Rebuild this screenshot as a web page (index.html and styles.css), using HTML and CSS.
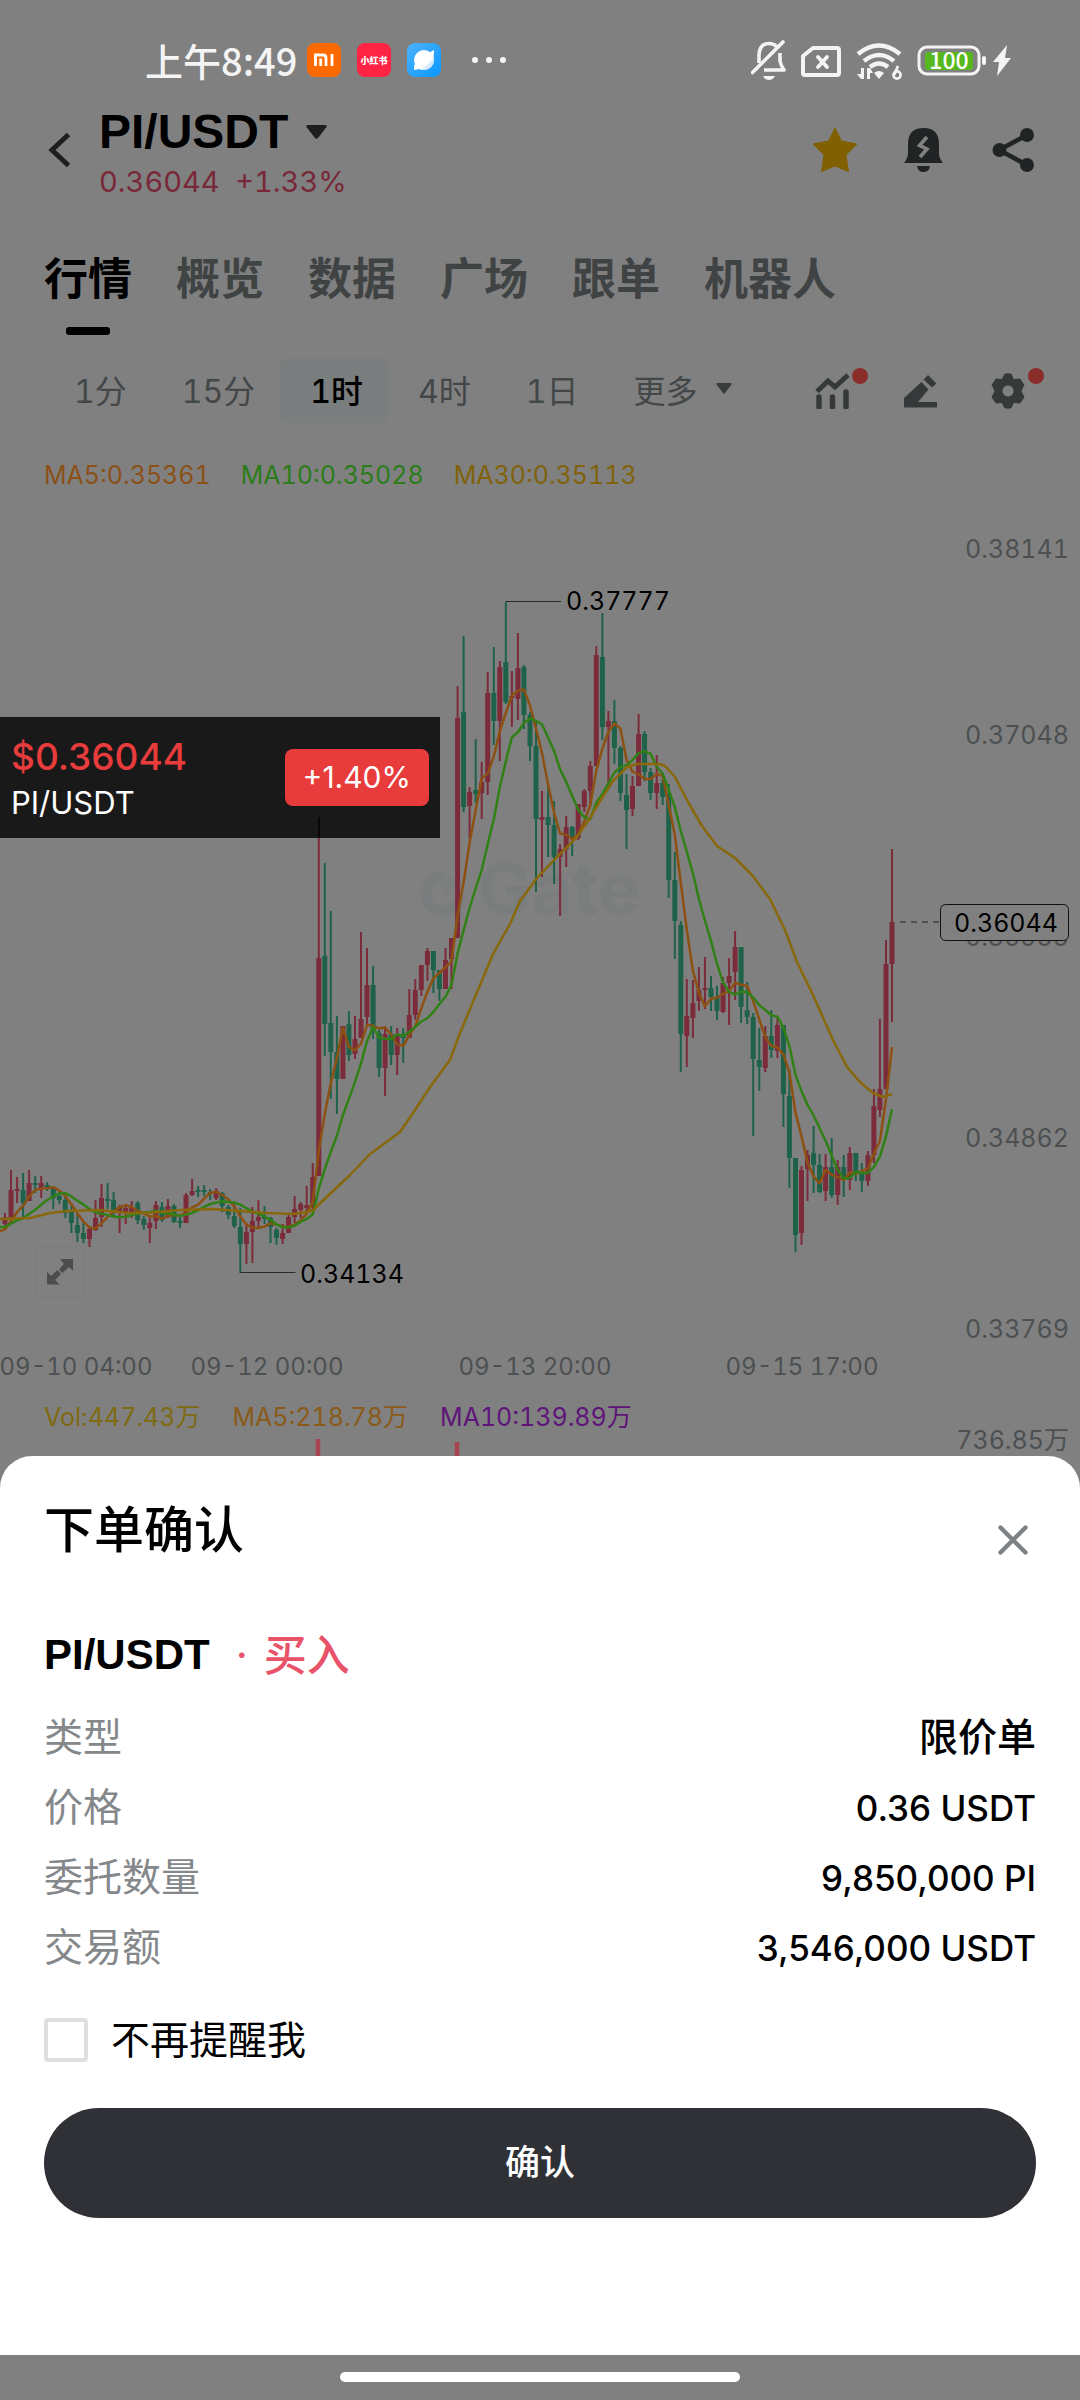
FILE: index.html
```html
<!DOCTYPE html>
<html lang="zh-CN">
<head>
<meta charset="utf-8">
<meta name="viewport" content="width=device-width, initial-scale=1">
<title>PI/USDT</title>
<link rel="stylesheet" href="styles.css">
</head>
<body>
<div class="status">
  <span class="status-time">上午8:49</span>
  <svg class="app-icon" viewBox="0 0 34 34" aria-hidden="true"><rect width="34" height="34" rx="8" fill="#ff6a00"/><path d="M8.500 23V12h7.500q3 0 3 3v8M13.700 15.500V23M25 11v12" fill="none" stroke="#fff" stroke-width="2.800"/></svg>
  <svg class="app-icon" viewBox="0 0 34 34" aria-hidden="true"><rect width="34" height="34" rx="8" fill="#ff2443"/><text class="app-name" x="17" y="21" text-anchor="middle">小红书</text></svg>
  <svg class="app-icon" viewBox="0 0 34 34" aria-hidden="true"><defs><linearGradient id="sky" x2="1" y2="1"><stop stop-color="#4db2ff"/><stop offset="1" stop-color="#0a98ff"/></linearGradient></defs><rect width="34" height="34" rx="8" fill="url(#sky)"/><circle cx="17" cy="17" r="10" fill="#fff"/><path d="M7 27q-1-5 5-12L27 7q1 7-5 13T7 27z" fill="#fff"/><path d="M12 27Q24 22 27 12q1 13-9 15z" fill="#d5ebfa"/></svg>
  <svg class="more-dots" viewBox="0 0 36 8" aria-hidden="true"><g fill="#f4f4f4"><circle cx="4" cy="4" r="3"/><circle cx="18" cy="4" r="3"/><circle cx="32" cy="4" r="3"/></g></svg>
  <svg class="status-right" viewBox="0 0 262 42" aria-hidden="true">
    <g fill="none" stroke="#f4f4f4" stroke-width="3.600" stroke-linejoin="round">
      <path d="M8 24V17C8 8 12 4.500 18 4.500q5 0 7.500 3M29 14v8q1 5 4 9H13"/><path d="M1.500 33.500L32 3" stroke-linecap="round"/>
      <path d="M52 17v17q0 2 2 2h32q2 0 2-2V11q0-2-2-2H62z" stroke-width="4"/>
      <path d="M67 18l9 10M76 18l-9 10" stroke-width="3.800" stroke-linecap="round"/>
      <path d="M107 15q21-17 42 0M113 22q15-12 30 0M119 28q9-7 18 0" stroke-width="4.400"/>
    </g>
    <path d="M12 37h12q-2 4-6 4t-6-4zM123 34q5-4 10 0l-5 6zM110 29h3v11h-3l-4-5h4zM116 40V29h3l3 5h-3v6z" fill="#f4f4f4"/>
    <circle cx="146" cy="36" r="3.600" fill="none" stroke="#f4f4f4" stroke-width="2.600"/><path d="M143 36l4-9" stroke="#f4f4f4" stroke-width="2.800"/>
    <rect x="168" y="8" width="60" height="27" rx="8" fill="none" stroke="#f4f4f4" stroke-width="3"/>
    <rect x="174" y="13" width="48" height="18" rx="3" fill="#57b81e"/><text class="battery-text" x="198" y="30" text-anchor="middle">100</text>
    <rect x="231" y="17" width="4" height="9" rx="2" fill="#f4f4f4"/>
    <path d="M256 6l-14 17h6l-2 14 14-18h-6z" fill="#f4f4f4"/>
  </svg>
</div>

<header class="pair-bar">
  <button class="icon-btn back" aria-label="返回"><svg width="24" height="36" viewBox="0 0 24 36"><path d="M20.500 2.500L4 18l16.500 15.500" fill="none" stroke="#1c1e1f" stroke-width="5"/></svg></button>
  <div class="pair-info">
    <h1 class="pair-title">PI/USDT <svg width="21" height="14" viewBox="0 0 21 14" aria-hidden="true"><path d="M1.500 0h18q2 1 1 2L12 13q-1.500 1.500-3 0L.500 2q-1-1 1-2z" fill="#1c1e1f"/></svg></h1>
    <p class="pair-price">0.36044&nbsp; +1.33%</p>
  </div>
  <div class="pair-actions">
    <button class="icon-btn" aria-label="收藏"><svg width="46" height="46" viewBox="0 0 46 46"><path d="M23 1l6.500 13L45 17 34 28l2.500 16.500L23 39 9.500 44.500 12 28 1 17l15.500-3z" fill="#806000" stroke="#806000" stroke-linejoin="round"/></svg></button>
    <button class="icon-btn" aria-label="提醒"><svg width="46" height="46" viewBox="0 0 46 46"><path d="M3 36q4-5 4-10V17Q7 1 22.500 1T38 17v9q0 5 4 10zM16 39h13q-1 6-6.500 6T16 39z" fill="#202425"/><path d="M26 10l-7.500 8.500 7.500 3.500-7 8" fill="none" stroke="#808080" stroke-width="3.600"/></svg></button>
    <button class="icon-btn" aria-label="分享"><svg width="46" height="46" viewBox="0 0 46 46"><path d="M37 8L9 23l28 15" fill="none" stroke="#202425" stroke-width="4.600"/><g fill="#202425"><circle cx="37" cy="8" r="7"/><circle cx="9.500" cy="23" r="7"/><circle cx="37" cy="38" r="7"/></g></svg></button>
  </div>
</header>

<nav class="tabs">
  <a class="tab active" href="#market">行情</a><a class="tab" href="#overview">概览</a><a class="tab" href="#data">数据</a><a class="tab" href="#square">广场</a><a class="tab" href="#copy">跟单</a><a class="tab" href="#bots">机器人</a>
</nav>

<div class="toolbar">
  <button class="period">1分</button><button class="period">15分</button><button class="period current">1时</button><button class="period">4时</button><button class="period">1日</button><button class="period">更多<svg width="16" height="11" viewBox="0 0 16 11" aria-hidden="true"><path d="M1 0h14q1 .500.500 1.500L9 10q-1 1-2 0L.500 1.500Q0 .500 1 0z" fill="#3a3d3e"/></svg></button>
  <div class="tools">
    <button class="icon-btn badge" aria-label="指标"><svg width="36" height="36" viewBox="0 0 36 36"><path d="M2 18.500L13 8l7 6L33 2" fill="none" stroke="#35393a" stroke-width="5"/><path d="M4 24v10M17.500 24v10M31 19v15" stroke="#35393a" stroke-width="5.500" stroke-linecap="round"/></svg></button>
    <button class="icon-btn" aria-label="画线"><svg width="36" height="36" viewBox="0 0 36 36"><path d="M1 34V25L18.500 9l7 7.500L15 29h19v5.500H1zM20.500 6.500L25 2l8.500 8.500-4.500 4z" fill="#35393a"/></svg></button>
    <button class="icon-btn badge" aria-label="设置"><svg width="36" height="36" viewBox="0 0 36 36"><path fill-rule="evenodd" d="M14 1h6l2.500 5.500 6.500-.500 4 6-3 6 3 6-4 6-6.500-.500L20 35h-6l-3-5.500L5 30l-4-6 3-6-3-6 4-6 6 .500zM17 12a6 6 0 1 0 .1 0z" fill="#35393a" stroke="#35393a" stroke-linejoin="round"/></svg></button>
  </div>
</div>

<main class="chart">
  <div class="legend price-legend"><span class="ma5">MA5:0.35361</span><span class="ma10">MA10:0.35028</span><span class="ma30">MA30:0.35113</span></div>
  <div class="plot">
    <svg id="candles" class="plot-svg" viewBox="0 500 1080 887" role="img" aria-label="PI/USDT 1时 K线">
      <g class="watermark"><path d="M443 877a17 17 0 1 0 17 17" fill="none" stroke="#7a7d7d" stroke-width="11"/><path d="M443 877h17v17h-17z" fill="#7c7f7f"/><text x="478" y="914">Gate</text></g>
      <g id="series"></g>
      <path d="M506 601.500h55M240.500 1272.500h55" class="leader"/>
      <path d="M900 922h40" class="last-line"/>
      <g class="mark"><text x="566" y="610">0.37777</text><text x="300" y="1283">0.34134</text></g>
      <g class="axis" text-anchor="end"><text x="1069" y="558">0.38141</text><text x="1069" y="744">0.37048</text><text x="1069" y="946">0.35955</text><text x="1069" y="1147">0.34862</text><text x="1069" y="1338">0.33769</text></g>
      <rect x="940.500" y="904.500" width="128" height="36" rx="5" class="last-box"/>
      <g class="mark"><text x="1058" y="932" text-anchor="end">0.36044</text></g>
      <g class="axis dates" text-anchor="middle"><text x="76" y="1375">09-10 04:00</text><text x="267" y="1375">09-12 00:00</text><text x="535" y="1375">09-13 20:00</text><text x="802" y="1375">09-15 17:00</text></g>
    </svg>
    <aside class="ticker">
      <div><p class="ticker-price">$0.36044</p><p class="ticker-pair">PI/USDT</p></div>
      <span class="ticker-change">+1.40%</span>
    </aside>
    <button class="icon-btn expand" aria-label="全屏"><svg width="26" height="26" viewBox="0 0 26 26"><path d="M13 0h13v12l-4-4-6.500 6L12 10.500 17 5zM0 25.500V13l4 4 6.500-6 3.500 4-6 6 4.500 4.500z" fill="#4a4c4d"/></svg></button>
  </div>
  <div class="volume">
    <div class="legend"><span class="vol">Vol:447.43万</span><span class="vma5">MA5:218.78万</span><span class="vma10">MA10:139.89万</span></div>
    <span class="vol-max">736.85万</span>
    <svg class="vol-bars" viewBox="0 0 1080 18" aria-hidden="true"><path d="M318 1v17M457 4v14" stroke="#a84352" stroke-width="4.500"/></svg>
  </div>
</main>

<section class="sheet" role="dialog" aria-labelledby="sheet-title">
  <div class="sheet-head">
    <h2 id="sheet-title">下单确认</h2>
    <button class="icon-btn close" aria-label="关闭"><svg width="30" height="30" viewBox="0 0 30 30"><path d="M2.500 2.500l25 25M27.500 2.500l-25 25" stroke="#7e8184" stroke-width="4.400" stroke-linecap="round"/></svg></button>
  </div>
  <p class="order-pair"><strong>PI/USDT</strong><span class="dot">·</span><span class="side">买入</span></p>
  <dl class="details">
    <div class="detail"><dt>类型</dt><dd>限价单</dd></div>
    <div class="detail"><dt>价格</dt><dd>0.36 USDT</dd></div>
    <div class="detail"><dt>委托数量</dt><dd>9,850,000 PI</dd></div>
    <div class="detail"><dt>交易额</dt><dd>3,546,000 USDT</dd></div>
  </dl>
  <label class="mute"><input type="checkbox">不再提醒我</label>
  <button class="confirm">确认</button>
</section>
<div class="home-bar"></div>
<script src="chart.js"></script>
</body>
</html>
```
FILE: styles.css
```css
* { box-sizing: border-box; }
body { margin: 0; background: #808080; color: #000; font-family: Inter, "Noto Sans CJK SC", sans-serif; overflow-x: hidden; }
h1, h2, p, dl, dd { margin: 0; }
button { margin: 0; border: 0; padding: 0; background: none; color: inherit; font: inherit; }
svg { display: block; flex: none; }
.icon-btn { display: flex; align-items: center; justify-content: center; }

.status { display: flex; align-items: center; padding: 15px 67px 0 145px; height: 104px; color: #f4f4f4; }
.status-time { font: 500 38px/56px "Noto Sans CJK SC", sans-serif; margin-right: 10px; }
.app-icon { width: 34px; height: 34px; margin-right: 16px; }
.app-name { font: 900 9px "Noto Sans CJK SC", sans-serif; fill: #fff; }
.more-dots { width: 36px; height: 8px; margin-left: 14px; }
.status-right { width: 262px; height: 42px; margin-left: auto; }
.battery-text { font: 500 23px "Noto Sans CJK SC", sans-serif; fill: #fff; }

.pair-bar { display: flex; align-items: flex-start; padding: 0 44px 0 48px; height: 100px; }
.back { width: 24px; height: 92px; margin-right: 27px; }
.pair-title { display: flex; align-items: center; gap: 18px; font: bold 48px/56px "Liberation Sans", sans-serif; }
.pair-price { font-size: 29px; line-height: 44px; color: #782838; font-variant-numeric: tabular-nums; }
.pair-actions { display: flex; align-items: center; gap: 43px; height: 92px; margin-left: auto; }

.tabs { display: flex; gap: 44px; padding: 43px 44px 0; }
.tab { display: flex; flex-direction: column; align-items: center; font-size: 44px; font-weight: 700; line-height: 64px; color: #404344; text-decoration: none; }
.tab::after { content: ""; width: 44px; height: 8px; border-radius: 3px; margin-top: 16px; }
.active { color: #000; }
.active::after { background: #000; }

.toolbar { display: flex; align-items: center; height: 65px; margin-top: 23px; padding: 0 53px 0 44px; }
.period { display: flex; align-items: center; gap: 18px; height: 65px; padding: 0 25px 4px 30px; font-size: 32px; color: #434748; white-space: nowrap; border-radius: 8px; font-variant-numeric: tabular-nums; }
.current { background: #7a7e7e; color: #000; font-weight: 500; }
.tools { display: flex; gap: 52px; margin-left: auto; }
.badge { position: relative; }
.badge::after { content: ""; position: absolute; right: -17px; top: -5px; width: 16px; height: 16px; border-radius: 50%; background: #8a2c2a; }

.legend { display: flex; gap: 32px; padding: 0 44px; font-size: 25px; white-space: nowrap; font-variant-numeric: tabular-nums; }
.price-legend { gap: 30px; line-height: 40px; margin: 32px 0 5px; }
.ma5 { color: #8a5018; }
.ma10 { color: #2c7c1a; }
.ma30 { color: #80620a; }
.vol { color: #7e6a10; }
.vma5 { color: #8a5a18; }
.vma10 { color: #5e1478; }

.plot { position: relative; font-variant-numeric: tabular-nums; }
.plot-svg { width: 100%; height: auto; }
.watermark text { font: bold 71px Inter, sans-serif; fill: #7a7d7d; }
.axis { font-size: 25px; fill: #4c5052; }
.dates { font-size: 24px; }
.mark { font-size: 25px; fill: #000; }
.leader { stroke: #2a2c2c; stroke-width: 1; fill: none; }
.last-line { stroke: #222; stroke-width: 1; stroke-dasharray: 6 5; }
.last-box { fill: #808080; stroke: #111; }
.up { stroke: #7c2b3a; }
.down { stroke: #1e624a; }
.wick { stroke-width: 2; fill: none; }
.body { stroke-width: 5; fill: none; }
.line { fill: none; stroke-width: 2.5; stroke-linejoin: round; }
.line5 { stroke: #8c5012; }
.line10 { stroke: #308016; }
.line30 { stroke: #88680a; }

.ticker { position: absolute; left: 0; top: 217px; width: 440px; height: 121px; display: flex; align-items: center; justify-content: space-between; padding: 0 11px; background: #191919; color: #fff; font-variant-numeric: normal; }
.ticker::after { content: ""; position: absolute; left: 318px; bottom: 0; width: 2px; height: 21px; background: #0b0708; }
.ticker-price { font-size: 37px; font-weight: 500; line-height: 50px; color: #e83c3c; }
.ticker-pair { font-size: 31px; line-height: 42px; }
.ticker-change { background: #e83b3b; border-radius: 8px; padding: 0 18px; font-size: 30px; line-height: 57px; }
.expand { position: absolute; left: 35px; bottom: 90px; width: 50px; height: 50px; border: 1px solid #7b7d7d; border-radius: 4px; }

.volume { position: relative; display: flex; justify-content: space-between; height: 69px; padding-right: 11px; }
.volume .legend { line-height: 60px; }
.vol-max { align-self: flex-end; font-size: 25px; line-height: 32px; color: #4c5052; font-variant-numeric: tabular-nums; }
.vol-bars { position: absolute; left: 0; bottom: 0; width: 100%; height: auto; }

.sheet { background: #fff; border-radius: 32px 32px 0 0; padding: 42px 44px 137px; }
.sheet-head { display: flex; justify-content: space-between; }
.sheet-head h2 { font-size: 50px; font-weight: 500; line-height: 64px; }
.close { width: 46px; height: 84px; }
.order-pair { display: flex; align-items: center; margin: 43px 0 17px; line-height: 60px; }
.order-pair strong { font: bold 42px/60px "Liberation Sans", sans-serif; }
.dot { color: #e8536a; font-size: 42px; width: 54px; text-align: center; padding-left: 10px; }
.side { color: #e8536a; font-size: 43px; font-weight: 500; }
.detail { display: flex; justify-content: space-between; align-items: baseline; height: 70px; font-size: 39px; line-height: 70px; }
.detail dt { color: #85888a; }
.detail dd { font-weight: 500; font-size: 35px; }
.detail:first-child dd { font-size: 39px; }
.mute { display: flex; align-items: center; gap: 23px; margin-top: 36px; font-size: 39px; line-height: 44px; }
.mute input { appearance: none; width: 44px; height: 44px; margin: 0; border: 4px solid #dedfe0; border-radius: 4px; background: #fff; }
.confirm { display: block; width: 100%; height: 110px; margin-top: 46px; padding-bottom: 8px; border-radius: 55px; background: #303136; color: #fff; font-size: 35px; font-weight: 500; }

.home-bar { display: flex; justify-content: center; padding: 17px 0 18px; }
.home-bar::after { content: ""; width: 37%; height: 10px; border-radius: 5px; background: #fff; }
```
FILE: chart.js
```js
// One candle per row: direction, high, body top, body bottom, low (plot units).
const data = `r 1213 1217 1224 1227|r 1170 1190 1217 1222|r 1177 1189 1190 1203|g 1173 1190 1203 1219|r 1170 1183 1201 1201|g 1176 1183 1185 1193|r 1176 1183 1189 1198|g 1182 1185 1187 1191|g 1186 1187 1198 1209|g 1192 1196 1200 1204
g 1197 1200 1213 1218|g 1204 1211 1223 1233|g 1213 1225 1233 1242|g 1223 1233 1239 1243|r 1228 1229 1239 1247|r 1200 1218 1230 1231|r 1184 1198 1217 1227|g 1183 1199 1200 1209|g 1192 1200 1213 1217|r 1205 1207 1212 1233
r 1204 1208 1213 1224|r 1201 1207 1212 1218|g 1201 1203 1220 1224|g 1216 1219 1225 1230|r 1218 1223 1228 1243|r 1201 1205 1221 1229|g 1202 1207 1220 1222|r 1199 1206 1217 1218|g 1204 1206 1222 1223|g 1217 1221 1223 1228
r 1193 1195 1223 1223|r 1179 1191 1195 1196|g 1186 1190 1192 1197|g 1185 1190 1192 1196|g 1189 1192 1194 1200|r 1188 1191 1198 1200|g 1192 1193 1206 1212|g 1205 1207 1215 1219|g 1203 1216 1226 1228|g 1208 1227 1244 1273
r 1223 1232 1244 1264|r 1207 1221 1232 1263|r 1200 1217 1221 1227|g 1206 1217 1219 1224|g 1217 1218 1227 1243|g 1228 1230 1238 1245|r 1224 1233 1239 1244|r 1215 1217 1233 1233|r 1196 1209 1217 1223|r 1202 1204 1210 1218
r 1186 1205 1208 1213|r 1163 1177 1205 1212|r 816 958 1176 1176|g 863 956 1024 1056|g 911 1023 1052 1099|g 1016 1052 1079 1114|r 1026 1026 1079 1079|g 1011 1024 1055 1061|r 1016 1039 1054 1059|r 932 1019 1038 1038
r 948 985 1017 1026|g 966 985 1031 1039|g 1030 1033 1068 1077|r 1026 1034 1068 1096|g 1026 1034 1055 1065|r 1028 1034 1055 1075|g 1028 1034 1038 1063|r 989 1015 1038 1038|r 979 990 1015 1020|r 965 965 990 996
r 948 951 965 981|g 951 951 970 993|g 970 970 989 1001|r 948 960 989 989|r 938 938 959 989|r 686 718 938 938|g 636 712 807 812|r 787 792 806 839|g 739 790 794 803|r 762 782 793 819
r 672 693 782 795|g 647 693 721 745|r 661 667 721 761|g 602 662 702 704|r 671 696 698 727|r 633 668 699 720|g 665 667 715 729|g 712 715 746 761|g 721 746 819 892|r 791 817 820 877
g 784 817 825 857|g 801 825 857 884|r 844 849 857 916|r 816 827 849 867|g 826 827 837 856|r 804 804 838 840|r 789 791 807 812|r 761 766 791 806|r 646 655 766 766|g 613 657 727 740
r 711 721 727 789|g 700 721 748 764|g 746 748 793 801|g 774 795 810 849|r 776 786 809 816|r 714 734 786 786|g 731 734 772 781|g 768 772 793 800|r 755 783 793 809|g 779 783 797 805
g 784 794 880 898|g 852 880 921 959|g 921 925 1034 1072|r 979 1016 1036 1067|r 980 1003 1018 1038|r 967 990 1001 1011|r 957 988 990 1009|g 976 988 997 1011|g 986 997 1011 1020|r 977 983 1012 1013
r 958 976 983 1025|r 931 947 972 1000|g 947 947 1007 1023|g 982 1010 1017 1024|g 1013 1017 1059 1136|g 1028 1060 1067 1091|r 1026 1036 1068 1072|g 1010 1036 1050 1058|r 1017 1025 1051 1058|g 1025 1025 1094 1127
g 1069 1096 1158 1188|g 1158 1158 1235 1252|r 1166 1170 1233 1245|r 1150 1155 1169 1201|g 1126 1153 1165 1193|g 1154 1165 1192 1193|r 1154 1167 1191 1201|g 1138 1167 1195 1198|r 1160 1167 1195 1205|g 1155 1167 1180 1197
r 1147 1153 1180 1190|g 1153 1153 1174 1181|g 1163 1173 1181 1192|r 1151 1155 1181 1186|r 1089 1106 1155 1163|r 1019 1089 1110 1117|r 940 964 1089 1089|r 849 922 964 1022`
  .split(/[|\n]/).map(row => {
    const [dir, ...v] = row.trim().split(" ");
    return [dir, ...v.map(Number)];
  });

const step = 887 / 147;
const x = i => (5 + i * step).toFixed(1);

const paths = { upWick: "", upBody: "", downWick: "", downBody: "" };
data.forEach(([dir, high, top, bottom, low], i) => {
  const key = dir === "r" ? "up" : "down";
  paths[key + "Wick"] += `M${x(i)} ${high}V${low}`;
  paths[key + "Body"] += `M${x(i)} ${top}V${Math.max(bottom, top + 2)}`;
});

// Closes that precede the first visible candle, needed by the averages.
const before = [1222, 1222, 1224, 1226, 1228, 1232, 1234, 1234, 1230];
const closes = before.concat(data.map(d => (d[0] === "r" ? d[2] : d[3])));
const average = n => data.map((_, i) => {
  const end = i + before.length + 1;
  const sum = closes.slice(end - n, end).reduce((a, b) => a + b, 0);
  return `${x(i)},${(sum / n).toFixed(1)}`;
}).join(" ");

const ma30 = "0,1219 30,1218 50,1213 67,1211 100,1210 127,1213 147,1213 180,1210 213,1209 240,1211 267,1213 293,1214 312,1211 333,1191 350,1175 370,1154 400,1132 413,1113 430,1087 450,1060 460,1033 493,954 510,924 520,901 537,878 557,857 577,837 590,818 600,801 613,781 627,767 637,764 660,764 665,766 675,777 688,802 702,826 717,846 735,858 752,875 770,899 785,930 797,962 813,995 833,1040 847,1067 860,1082 873,1093 883,1097 892,1094";

document.getElementById("series").innerHTML = `
  <path class="up wick" d="${paths.upWick}"/>
  <path class="down wick" d="${paths.downWick}"/>
  <path class="up body" d="${paths.upBody}"/>
  <path class="down body" d="${paths.downBody}"/>
  <polyline class="line line5" points="0,1231 ${average(5)}"/>
  <polyline class="line line10" points="0,1227 ${average(10)}"/>
  <polyline class="line line30" points="${ma30}"/>`;
```
